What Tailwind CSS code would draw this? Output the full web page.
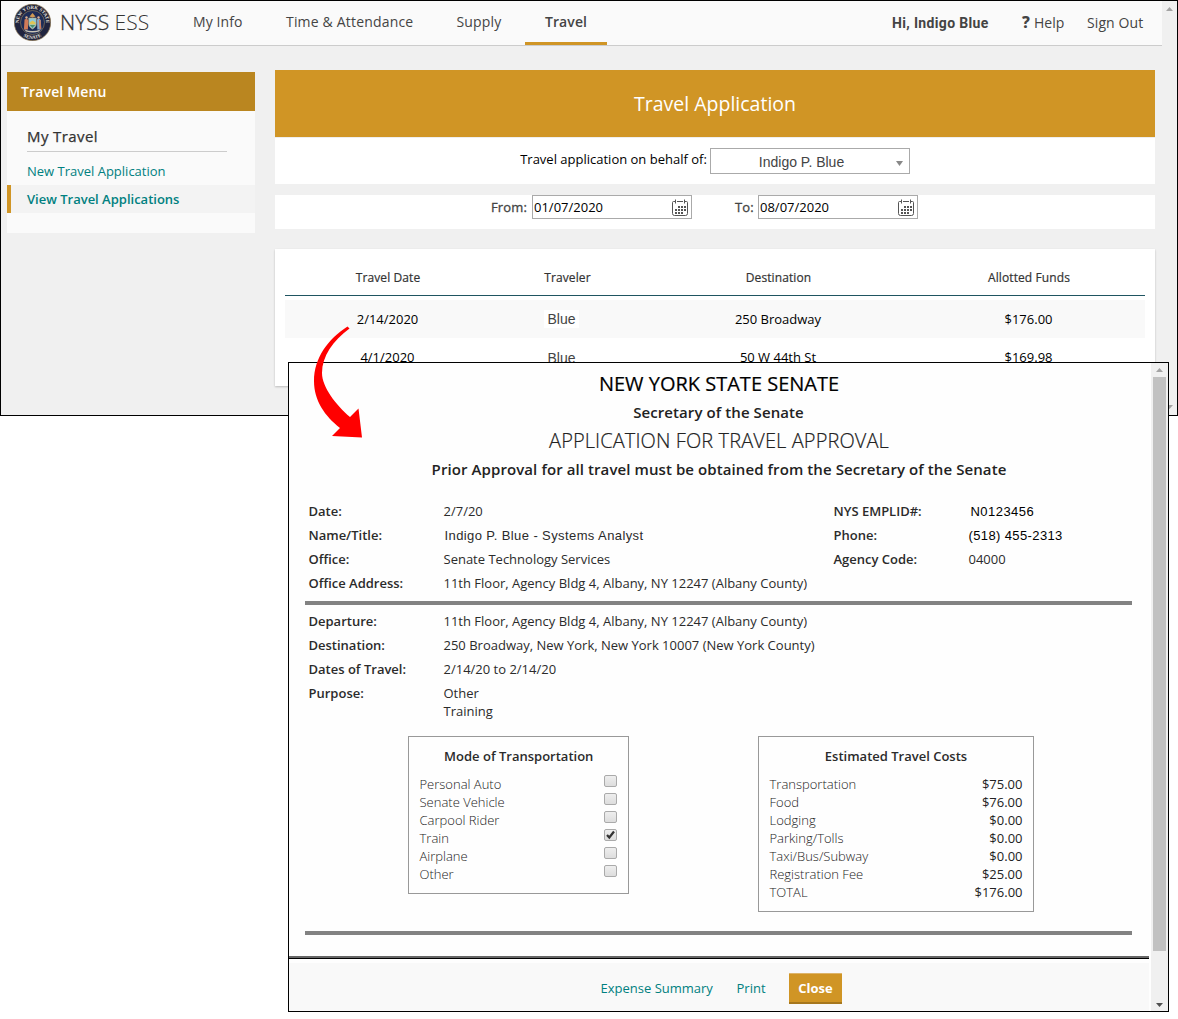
<!DOCTYPE html>
<html lang="en">
<head>
<meta charset="utf-8">
<title>NYSS ESS - Travel Application</title>
<script src="https://cdn.jsdelivr.net/npm/@tailwindcss/browser@4"></script>
</head>
<body class="relative h-[1019px] w-[1178px] overflow-hidden bg-white font-['Open_Sans',sans-serif] text-[13px] text-black">
<div class="flex h-[416px] w-[1178px] border border-black bg-[#f0f0f0]">
  <div class="w-[1161px] shrink-0">
    <header class="flex h-[45px] border-b border-[#ccc] bg-[#fafafa] text-[14px] text-[#444]">
      <svg class="mt-[3px] ml-[13px] h-[37px] w-[37px] shrink-0" viewBox="0 0 37 37">
        <circle cx="18.5" cy="18.5" r="18.2" fill="#20243f" stroke="#8a744f" stroke-width=".7"/>
        <circle cx="18.5" cy="18.5" r="12" fill="#1d2c57" stroke="#9a8a63" stroke-width=".6"/>
        <defs><path id="arcTop" d="M4.900 18.500a13.600 13.600 0 0 1 27.200 0"/><path id="arcBottom" d="M2 18.500a16.500 16.500 0 0 0 33 0"/></defs>
        <text font-size="4.900" font-weight="700" font-family="Liberation Serif" fill="#e6e3dd" text-anchor="middle"><textPath href="#arcTop" startOffset="50%">NEW YORK STATE</textPath></text>
        <text font-size="4.900" font-weight="700" font-family="Liberation Serif" fill="#e6e3dd" text-anchor="middle"><textPath href="#arcBottom" startOffset="50%">SENATE</textPath></text>
        <path d="M14.800 14h7.400v6c0 2.500-2 4-3.700 5-1.700-1-3.700-2.500-3.700-5z" fill="#8cc8dc" stroke="#c9a96d" stroke-width=".6"/>
        <path d="M15.500 18.500l3-2 3 2v2h-6z" fill="#e0c655"/><path d="M15.800 21h5.400l-2.700 3z" fill="#4d8f6b"/>
        <path d="M10.500 15.500l2.500-1 1.200 2-.3 9h-4z" fill="#d07a58"/><path d="M23 15.500l2-1 1.800 1.500.5 9.500h-4z" fill="#86a8c6"/><path d="M25 16l1.500 0 .8 9h-1.800z" fill="#d07a58"/>
        <path d="M15.500 12.500l3-3.500 3 3.500-3 1z" fill="#cf9a55"/><path d="M10.500 25.500q8 3 16 0l-1.500 2q-6.500 2-13 0z" fill="#c9c5b7"/>
        <circle cx="12.500" cy="13.500" r="1.200" fill="#dbb091"/><circle cx="24.500" cy="13.500" r="1.200" fill="#dbb091"/>
      </svg>
      <div class="ml-[9px] w-[133px] shrink-0 text-[21px] leading-[43px] text-[#333]"><span class="font-light [-webkit-text-stroke:.3px]">NYSS</span> <span class="font-light">ESS</span></div>
      <nav class="flex leading-[42px] whitespace-nowrap">
        <a class="w-[93px] tracking-[.1px]">My Info</a>
        <a class="w-[170px] tracking-[.18px]">Time &amp; Attendance</a>
        <a class="w-[69px] pl-[.5px] tracking-[.15px]">Supply</a>
        <a class="h-[44px] w-[82px] border-b-3 border-[#d09525] text-center font-semibold tracking-[.1px]">Travel</a>
      </nav>
      <div class="ml-[285px] flex leading-[44px] whitespace-nowrap">
        <span class="w-[130px] font-[Roboto,sans-serif] font-bold tracking-[.35px]">Hi, Indigo Blue</span>
        <a class="flex w-[65px] gap-[3px]"><b class="w-[9px] font-['Noto_Sans'] text-[16px] leading-[42px] font-extrabold">?</b>Help</a>
        <a class="tracking-[.1px]">Sign Out</a>
      </div>
    </header>
    <div class="flex gap-5 pl-[6px]">
      <aside class="mt-[26px] h-[161px] w-[248px] bg-[#fafafa] text-[#008080]">
        <h2 class="h-[39px] bg-[#ba8620] pl-[14px] text-[14px] leading-[39px] font-semibold tracking-[.15px] text-white">Travel Menu</h2>
        <h3 class="ml-5 h-[41px] w-[200px] border-b border-[#ccc] pt-[11px] text-[15px] leading-[29px] tracking-[.4px] text-[#333] [-webkit-text-stroke:.25px]">My Travel</h3>
        <a class="mt-[5px] block h-[28px] pl-5 leading-[28px]">New Travel Application</a>
        <a class="block h-[28px] border-l-4 border-[#d09525] bg-[#f3f3f3] pl-4 leading-[28px] font-semibold">View Travel Applications</a>
      </aside>
      <main class="mt-6 w-[880px]">
        <h1 class="h-[67px] bg-[#d09525] text-center text-[19.500px] leading-[67px] text-white">Travel Application</h1>
        <div class="flex h-[47px] justify-center gap-[3px] border-t border-[#eee] bg-white">
          <label class="leading-[43px]">Travel application on behalf of:</label>
          <div class="mt-[10px] flex h-[26px] w-[200px] items-center border border-[#aaa] pl-12 font-['Liberation_Sans',sans-serif] text-[14px] text-[#444]">
            <span class="w-[137px] pt-[2px]">Indigo P. Blue</span>
            <svg class="mt-1 h-[5px] w-[7px]" viewBox="0 0 7 5"><path d="M0 0h7L3.500 5z" fill="#888"/></svg>
          </div>
        </div>
        <div class="mt-[11px] flex h-[34px] bg-white pl-[216px] leading-[25px]">
          <label class="w-[41px] tracking-[.15px] text-[#444] [-webkit-text-stroke:.3px]">From:</label>
          <div class="flex h-6 w-[160px] items-center justify-between border border-[#aaa] pr-[3px] pl-px"><span>01/07/2020</span>
            <svg class="h-[17px] w-4" viewBox="0 0 16 17" fill="none" stroke="#555"><path d="M3 2.500H1.500q-1 0-1 1v11q0 2 2 2h11q2 0 2-2v-11q0-1-1-1H13M5 2.500h6M3.500 .5v4M12.500 .5v4"/><path d="M6 8h8M3 11h11M3 14h8" stroke-width="2" stroke-dasharray="2 1"/></svg>
          </div>
          <label class="ml-[43px] w-[23px] tracking-[.15px] text-[#444] [-webkit-text-stroke:.3px]">To:</label>
          <div class="flex h-6 w-[160px] items-center justify-between border border-[#aaa] pr-[3px] pl-px"><span>08/07/2020</span>
            <svg class="h-[17px] w-4" viewBox="0 0 16 17" fill="none" stroke="#555"><path d="M3 2.500H1.500q-1 0-1 1v11q0 2 2 2h11q2 0 2-2v-11q0-1-1-1H13M5 2.500h6M3.500 .5v4M12.500 .5v4"/><path d="M6 8h8M3 11h11M3 14h8" stroke-width="2" stroke-dasharray="2 1"/></svg>
          </div>
        </div>
        <section class="mt-5 h-[137px] bg-white px-[10px] pt-[10px] text-center shadow-[0_1px_2px_rgba(0,0,0,.22)]">
          <div class="grid h-[37px] grid-cols-[205px_154px_268px_233px] border-b border-[#1f5561] pl-[.5px] text-[12px] leading-[37px] tracking-[.1px] text-[#333] [-webkit-text-stroke:.2px]">
            <span>Travel Date</span><span>Traveler</span><span>Destination</span><span>Allotted Funds</span>
          </div>
          <div class="mt-1 grid h-[38px] grid-cols-[205px_154px_268px_233px] bg-[#f9f9f9] leading-[38px]">
            <span>2/14/2020</span><span class="pr-[11px] font-['Liberation_Sans',sans-serif] text-[14px] leading-[39px] text-[#444]"><span class="bg-white px-[3px] py-px">Blue</span></span><span>250 Broadway</span><span>$176.00</span>
          </div>
          <div class="grid h-[38px] grid-cols-[205px_154px_268px_233px] leading-[38px]">
            <span>4/1/2020</span><span class="pr-[11px] font-['Liberation_Sans',sans-serif] text-[14px] leading-[41px] text-[#444]">Blue</span><span>50 W 44th St</span><span>$169.98</span>
          </div>
        </section>
      </main>
    </div>
  </div>
  <div class="flex flex-1 flex-col items-center justify-between pt-[6px] pb-[6px]">
    <svg class="h-1 w-[7px]" viewBox="0 0 7 4"><path d="M0 4h7L3.500 0z" fill="#a3a3a3"/></svg>
    <svg class="h-1 w-[7px]" viewBox="0 0 7 4"><path d="M0 0h7L3.500 4z" fill="#a3a3a3"/></svg>
  </div>
</div>

<!-- Travel application form dialog -->
<div class="absolute top-[362px] left-[288px] flex h-[650px] w-[881px] border border-black bg-[#fefefe] text-[#2b2b2b]">
  <div class="flex w-[860px] shrink-0 flex-col">
    <div class="h-[593px]">
      <div class="pt-[7px] text-center text-[15px] font-semibold text-[#222]">
        <h1 class="h-7 text-[20px] leading-[27px] font-normal text-black [-webkit-text-stroke:.2px]">NEW YORK STATE SENATE</h1>
        <p class="h-[29px] pr-px leading-[28px] tracking-[.09px]">Secretary of the Senate</p>
        <h2 class="h-7 text-[20px] leading-[28px] font-light tracking-[.1px] [-webkit-text-stroke:.2px]">APPLICATION FOR TRAVEL APPROVAL</h2>
        <p class="h-[29px] leading-[28px] tracking-[.09px]">Prior Approval for all travel must be obtained from the Secretary of the Senate</p>
      </div>
      <div class="mt-[15px] grid grid-cols-[135px_390px_135px_1fr] pl-[19.500px] leading-6 whitespace-nowrap">
        <b class="font-semibold">Date:</b><span>2/7/20</span><b class="font-semibold">NYS EMPLID#:</b><span class="pt-px pl-[2px] font-['Liberation_Sans'] leading-[23px] tracking-[.45px] text-black">N0123456</span>
        <b class="font-semibold">Name/Title:</b><span class="pt-px pl-px font-['Liberation_Sans'] leading-[23px] tracking-[.4px]">Indigo P. Blue - Systems Analyst</span><b class="font-semibold">Phone:</b><span class="pt-px font-['Liberation_Sans'] leading-[23px] tracking-[.38px] text-black">(518) 455-2313</span>
        <b class="font-semibold">Office:</b><span>Senate Technology Services</span><b class="font-semibold">Agency Code:</b><span>04000</span>
        <b class="font-semibold">Office Address:</b><span>11th Floor, Agency Bldg 4, Albany, NY 12247 (Albany County)</span>
      </div>
      <div class="mt-[6px] ml-[16.400px] h-1 w-[826.500px] bg-[#828282]"></div>
      <div class="mt-1 grid grid-cols-[135px_1fr] pl-[19.500px] leading-6">
        <b class="font-semibold">Departure:</b><span>11th Floor, Agency Bldg 4, Albany, NY 12247 (Albany County)</span>
        <b class="font-semibold">Destination:</b><span>250 Broadway, New York, New York 10007 (New York County)</span>
        <b class="font-semibold">Dates of Travel:</b><span>2/14/20 to 2/14/20</span>
        <b class="font-semibold">Purpose:</b><span>Other</span>
        <span class="col-start-2 -mt-[3px] h-[18px] leading-[18px]">Training</span>
      </div>
      <div class="mt-[16px] flex items-start gap-[129px] pl-[119px]">
        <section class="h-[158px] w-[221px] border border-[#999] pt-[9px] pr-[10px] pl-[10.500px]">
          <h3 class="mb-[9px] text-center leading-5 font-semibold">Mode of Transportation</h3>
          <ul class="leading-[18px] font-light text-[#222]">
            <li class="flex h-[18px] justify-between">Personal Auto<i class="mr-px h-3 w-[13px] rounded-[2px] border border-[#aaa] bg-linear-to-b from-[#eee] to-[#ddd]"></i></li>
            <li class="flex h-[18px] justify-between">Senate Vehicle<i class="mr-px h-3 w-[13px] rounded-[2px] border border-[#aaa] bg-linear-to-b from-[#eee] to-[#ddd]"></i></li>
            <li class="flex h-[18px] justify-between">Carpool Rider<i class="mr-px h-3 w-[13px] rounded-[2px] border border-[#aaa] bg-linear-to-b from-[#eee] to-[#ddd]"></i></li>
            <li class="flex h-[18px] justify-between">Train<i class="mr-px h-3 w-[13px] rounded-[2px] border border-[#aaa] bg-linear-to-b from-[#eee] to-[#ddd]"><svg class="h-[10px] w-[11px]" viewBox="0 0 11 10" fill="none" stroke="#333" stroke-width="2.200"><path d="M2 5l2.300 2.500L9 1.500"/></svg></i></li>
            <li class="flex h-[18px] justify-between">Airplane<i class="mr-px h-3 w-[13px] rounded-[2px] border border-[#aaa] bg-linear-to-b from-[#eee] to-[#ddd]"></i></li>
            <li class="flex h-[18px] justify-between">Other<i class="mr-px h-3 w-[13px] rounded-[2px] border border-[#aaa] bg-linear-to-b from-[#eee] to-[#ddd]"></i></li>
          </ul>
        </section>
        <section class="h-[176px] w-[276px] border border-[#999] pt-[9px] pr-[10.500px] pl-[10.500px]">
          <h3 class="mb-[9px] text-center leading-5 font-semibold">Estimated Travel Costs</h3>
          <ul class="leading-[18px] font-light text-[#222]">
            <li class="flex justify-between">Transportation<span class="font-normal">$75.00</span></li>
            <li class="flex justify-between">Food<span class="font-normal">$76.00</span></li>
            <li class="flex justify-between">Lodging<span class="font-normal">$0.00</span></li>
            <li class="flex justify-between">Parking/Tolls<span class="font-normal">$0.00</span></li>
            <li class="flex justify-between">Taxi/Bus/Subway<span class="font-normal">$0.00</span></li>
            <li class="flex justify-between">Registration Fee<span class="font-normal">$25.00</span></li>
            <li class="flex justify-between">TOTAL<span class="font-normal">$176.00</span></li>
          </ul>
        </section>
      </div>
      <div class="mt-[19px] ml-[16.400px] h-1 w-[826.500px] bg-[#828282]"></div>
    </div>
    <div class="h-[3px] shrink-0 border-b border-black bg-[#666]"></div>
    <footer class="mt-1 flex h-12 items-start bg-[#f9f9f9] pt-[10px] pl-[311.500px] leading-[31px] whitespace-nowrap text-[#008080]">
      <a class="w-[136px]">Expense Summary</a><a class="w-[52.500px]">Print</a>
      <button class="h-[31px] w-[53px] border-t border-b-2 border-t-[#deb46a] border-b-[#a6771e] bg-[#d09525] leading-[28px] font-bold text-white">Close</button>
    </footer>
  </div>
  <div class="ml-[2px] flex w-[17px] flex-col items-center bg-[#f0f0f0] pt-[5px]">
    <svg class="h-1 w-[7px]" viewBox="0 0 7 4"><path d="M0 4h7L3.500 0z" fill="#a3a3a3"/></svg>
    <div class="mt-[5px] h-[574px] w-[13px] bg-[#c1c1c1]"></div>
    <svg class="mt-[52px] h-1 w-[7px]" viewBox="0 0 7 4"><path d="M0 0h7L3.500 4z" fill="#505050"/></svg>
  </div>
</div>

<!-- Arrow from the selected row to its form -->
<svg class="absolute top-[320px] left-[305px] h-[125px] w-[65px]" viewBox="305 320 65 125"><path d="M347.500 326.500C328 339 314 358 314 381C314 401 325 416 340 428L332 436L362 437.500L358.500 408.500L350 417C336 405 322 387 322 373C322 356 333 341 349.500 328.500Z" fill="#f00"/></svg>
</body>
</html>
